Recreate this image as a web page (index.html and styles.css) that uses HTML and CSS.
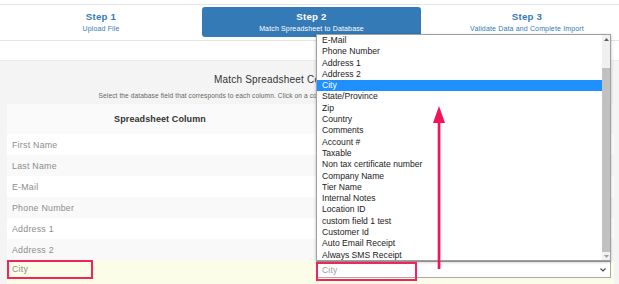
FILE: index.html
```html
<!DOCTYPE html>
<html>
<head>
<meta charset="utf-8">
<link rel="stylesheet" href="styles.css">
</head>
<body>
<div class="page">
  <div class="steps">
    <div class="step">
      <div class="step-title">Step 1</div>
      <div class="step-sub">Upload File</div>
    </div>
    <div class="step active">
      <div class="step-title">Step 2</div>
      <div class="step-sub">Match Spreadsheet to Database</div>
    </div>
    <div class="step">
      <div class="step-title">Step 3</div>
      <div class="step-sub">Validate Data and Complete Import</div>
    </div>
  </div>
  <div class="gap"></div>
  <div class="main">
    <h2 class="title">Match Spreadsheet Columns to Database</h2>
    <p class="subtitle">Select the database field that corresponds to each column. Click on a column name to see sample data from your uploaded spreadsheet file.</p>
    <div class="table">
      <div class="row head"><div class="cell">Spreadsheet Column</div><div class="cell">Database Field</div></div>
      <div class="row"><div class="cell">First Name</div><div class="cell"></div></div>
      <div class="row alt"><div class="cell">Last Name</div><div class="cell"></div></div>
      <div class="row"><div class="cell">E-Mail</div><div class="cell"></div></div>
      <div class="row alt"><div class="cell">Phone Number</div><div class="cell"></div></div>
      <div class="row"><div class="cell">Address 1</div><div class="cell"></div></div>
      <div class="row alt"><div class="cell">Address 2</div><div class="cell"></div></div>
      <div class="row current">
        <div class="cell"><span class="mark-left">City</span></div>
        <div class="cell">
          <div class="select">
            <span class="select-value">City</span>
            <svg class="chev" width="6" height="4" viewBox="0 0 6 4"><path d="M0.5 0.5 L3 3 L5.5 0.5" fill="none" stroke="#444" stroke-width="1.1"/></svg>
          </div>
        </div>
      </div>
    </div>
  </div>

  <div class="dropdown">
    <ul class="options">
      <li>E-Mail</li>
      <li>Phone Number</li>
      <li>Address 1</li>
      <li>Address 2</li>
      <li class="selected">City</li>
      <li>State/Province</li>
      <li>Zip</li>
      <li>Country</li>
      <li>Comments</li>
      <li>Account #</li>
      <li>Taxable</li>
      <li>Non tax certificate number</li>
      <li>Company Name</li>
      <li>Tier Name</li>
      <li>Internal Notes</li>
      <li>Location ID</li>
      <li>custom field 1 test</li>
      <li>Customer Id</li>
      <li>Auto Email Receipt</li>
      <li>Always SMS Receipt</li>
    </ul>
    <div class="scrollbar">
      <div class="sb-btn"><svg width="5" height="3" viewBox="0 0 5 3"><path d="M0 3 L2.5 0 L5 3 Z" fill="#606060"/></svg></div>
      <div class="sb-track"><div class="sb-thumb"></div></div>
      <div class="sb-btn"><svg width="5" height="3" viewBox="0 0 5 3"><path d="M0 0 L2.5 3 L5 0 Z" fill="#a0a0a0"/></svg></div>
    </div>
  </div>

  <div class="mark-select"></div>
  <svg class="arrow" width="12" height="164" viewBox="0 0 12 164">
    <polygon points="6,0 12,17 0,17" fill="#f2135a"/>
    <rect x="4.7" y="15" width="2.7" height="148" fill="#f2135a"/>
  </svg>
</div>
</body>
</html>
```
FILE: styles.css
```css
* { box-sizing: border-box; }
html, body { margin: 0; padding: 0; }
body {
  background: #fff;
  font-family: "Liberation Sans", Arial, sans-serif;
  width: 619px;
  height: 284px;
  overflow: hidden;
}
.page { position: relative; width: 619px; height: 284px; overflow: hidden; }

.steps {
  margin-top: 4px;
  height: 37px;
  border-top: 1px solid #e4e4e4;
  border-bottom: 1px solid #e4e4e4;
  padding: 2px 0 3px;
  display: grid;
  grid-template-columns: 202px 219px 212px;
  overflow: hidden;
}
.step {
  display: flex;
  flex-direction: column;
  align-items: center;
  justify-content: center;
  gap: 2px;
  color: #337ab7;
  white-space: nowrap;
}
.step.active {
  background: #337ab7;
  color: #fff;
  border-radius: 3px;
}
.step-title { font-weight: bold; font-size: 9.7px; line-height: 11px; letter-spacing: 0.2px; }
.step-sub { font-size: 7px; line-height: 9px; letter-spacing: 0.15px; }

.gap { height: 19px; }

.main {
  background: #f4f4f4;
  border-top: 1px solid #ebebeb;
  padding: 0 5px 0 7px;
  height: 224px;
}
.title {
  margin: 13px 0 0;
  text-align: center;
  font-size: 10px;
  line-height: 12px;
  font-weight: normal;
  color: #333;
  letter-spacing: 0.2px;
}
.subtitle {
  margin: 6px 0 4px;
  text-align: center;
  font-size: 6.6px;
  line-height: 8px;
  color: #666;
  letter-spacing: 0.1px;
  white-space: nowrap;
}
.table { background: #fff; }
.row {
  display: grid;
  grid-template-columns: 306px 1fr;
  height: 21px;
}
.row.alt { background: #f9f9f9; }
.row.head { height: 30px; background: #fafafa; }
.cell {
  display: flex;
  align-items: center;
  padding-left: 5px;
  font-size: 8.8px;
  color: #8c8c8c;
  letter-spacing: 0.25px;
}
.row.head .cell {
  justify-content: center;
  padding-left: 0;
  font-weight: bold;
  font-size: 9px;
  color: #333;
  letter-spacing: 0.1px;
}
.row.current { background: #fcfde9; height: 24px; }
.row.current .cell { padding-left: 0; align-items: flex-start; }
.mark-left {
  display: inline-block;
  width: 86px;
  height: 19px;
  border: 2px solid #f2245c;
  padding-left: 3px;
  line-height: 15px;
}
.select {
  margin: 1px 3px 0 3px;
  width: 295px;
  height: 17px;
  border: 1px solid #a9a9a9;
  background: #fff;
  display: flex;
  align-items: center;
  justify-content: space-between;
  padding: 0 4px 0 5px;
}
.select-value { font-size: 8.5px; color: #9a9a9a; letter-spacing: 0.2px; }
.chev { display: block; }

.dropdown {
  position: absolute;
  left: 316px;
  top: 34px;
  width: 295px;
  height: 227px;
  border: 1px solid #a0a0a0;
  background: #fff;
  box-shadow: 0 1px 3px rgba(0,0,0,0.25);
  display: flex;
}
.options {
  list-style: none;
  margin: 0;
  padding: 0;
  flex: 1;
  font-size: 8.6px;
  color: #222;
}
.options li {
  height: 11.3px;
  line-height: 11.3px;
  padding-left: 5px;
  white-space: nowrap;
}
.options li.selected { background: #1e90ff; color: #fff; }
.scrollbar {
  width: 8px;
  background: #f0f0f0;
  display: flex;
  flex-direction: column;
}
.sb-btn {
  height: 9px;
  display: flex;
  align-items: center;
  justify-content: center;
}
.sb-track { flex: 1; display: flex; flex-direction: column; }
.sb-thumb {
  margin-top: 25px;
  height: 184px;
  background: #c1c1c1;
}

.mark-select {
  position: absolute;
  left: 316px;
  top: 262px;
  width: 101px;
  height: 19px;
  border: 2px solid #f2245c;
}
.arrow {
  position: absolute;
  left: 433px;
  top: 106px;
}
```
